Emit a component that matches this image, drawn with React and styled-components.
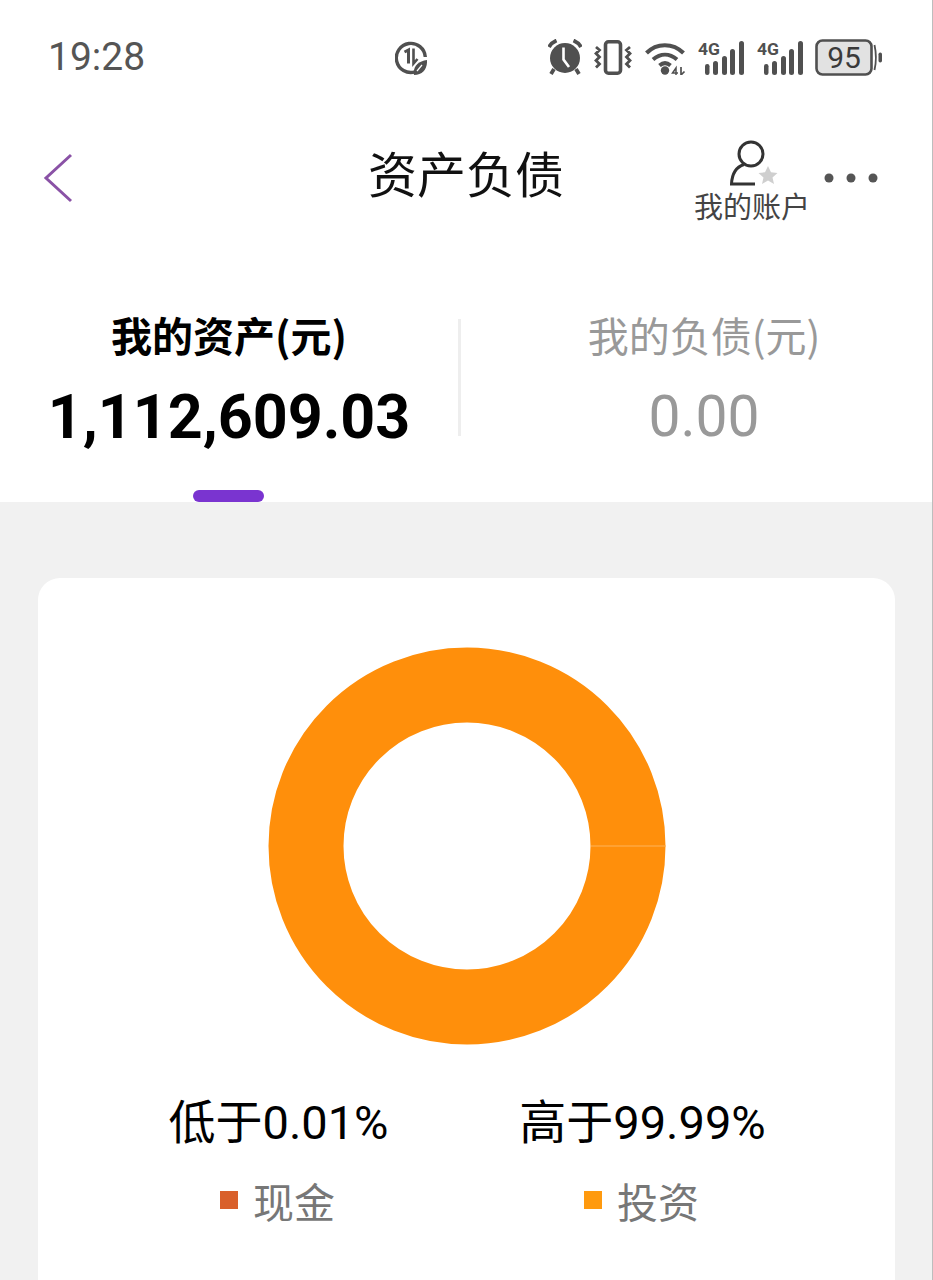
import React from "react";
import styled, { createGlobalStyle } from "styled-components";

const Global = createGlobalStyle`
  html, body { margin: 0; padding: 0; background: #f1f1f1; }
  body { font-family: Roboto, "Noto Sans CJK SC", sans-serif; overflow: hidden; }
`;

const Page = styled.div`
  width: 933px;
  height: 1280px;
  overflow: hidden;
  background: #f1f1f1;
  border-right: 1px solid #bdbdbd;
  box-sizing: border-box;
`;
const Header = styled.header`
  height: 502px;
  background: #fff;
  display: flex;
  flex-direction: column;
`;
const StatusBar = styled.div`
  height: 113px;
  box-sizing: border-box;
  padding: 34px 0 0 48px;
  display: flex;
  align-items: flex-start;
`;
const Time = styled.div`
  font: 400 39px/46px "Roboto", sans-serif;
  width: 347px;
  flex: none;
  color: #555;
`;
const StatusIcons = styled.div`
  display: flex;
  align-items: center;
  height: 46px;
`;
const Glyph = styled.svg`
  flex: none;
  margin-left: ${(p) => p.$ml || 0}px;
  margin-top: ${(p) => p.$mt || 0}px;
`;
const NavBar = styled.nav`
  height: 130px;
  position: relative;
  display: flex;
  align-items: center;
  padding-left: 43px;
`;
const NavTitle = styled.h1`
  position: absolute;
  left: 0;
  right: 0;
  top: 26px;
  margin: 0;
  text-align: center;
  font: 400 49px/66px "Noto Sans CJK SC", sans-serif;
  color: #111;
`;
const NavRight = styled.div`
  margin-left: auto;
  display: flex;
  align-items: flex-start;
  padding-right: 54px;
  gap: 14px;
  position: relative;
  top: 2px;
`;
const Account = styled.div`
  display: flex;
  flex-direction: column;
  align-items: center;
  width: 116px;
`;
const AccountLabel = styled.span`
  font: 400 29px/34px "Noto Sans CJK SC", sans-serif;
  color: #444;
  margin-top: 1px;
`;
const Tabs = styled.div`
  flex: 1;
  display: flex;
  padding-top: 76px;
  position: relative;
`;
const Tab = styled.div`
  flex: none;
  width: ${(p) => p.$w}px;
  height: 117px;
  display: flex;
  flex-direction: column;
  align-items: center;
  color: ${(p) => (p.$active ? "#000" : "#999")};
`;
const TabLabel = styled.div`
  font: ${(p) => (p.$active ? 700 : 400)} 41px/34px "Noto Sans CJK SC", sans-serif;
  margin-top: -2px;
`;
const TabValue = styled.div`
  font: ${(p) => (p.$active ? "700 61px" : "400 57px")}/70px "Roboto", sans-serif;
  margin-top: 31px;
`;
const Divider = styled.div`
  flex: none;
  width: 3px;
  height: 117px;
  background: #eeeeee;
`;
const Indicator = styled.div`
  position: absolute;
  left: 193px;
  bottom: 0;
  width: 71px;
  height: 12px;
  border-radius: 6px;
  background: #7a34d0;
`;
const Card = styled.section`
  margin: 76px 37px 0 38px;
  height: 800px;
  background: #fff;
  border-radius: 22px;
  padding-top: 69px;
  box-sizing: border-box;
  display: flex;
  flex-direction: column;
  align-items: center;
`;
const Donut = styled.div`
  width: 398px;
  height: 398px;
  flex: none;
  margin-left: 1px;
`;
const Legend = styled.div`
  display: grid;
  grid-template-columns: 364px 364px;
  width: 728px;
  margin: 47px 0 0 -12px;
`;
const LegendItem = styled.div`
  display: flex;
  flex-direction: column;
  align-items: center;
`;
const Percent = styled.div`
  font: 400 47px/62px Roboto, "Noto Sans CJK SC", sans-serif;
  color: #000;
`;
const LegendName = styled.div`
  display: flex;
  align-items: center;
  gap: 15px;
  margin: 21px 2px 0 0;
  font: 400 41px/50px "Noto Sans CJK SC", sans-serif;
  color: #777;
`;
const Swatch = styled.i`
  width: 18px;
  height: 18px;
  background: ${(p) => p.$c};
`;

const C = "#505050";
const Dtt = () => (
  <Glyph width="32" height="35" viewBox="0 0 32 35">
    <path d="M20 31.800A14.500 14.500 0 1 1 30.300 17" fill="none" stroke={C} strokeWidth="3.400" />
    <path d="M9.500 12l4-2v13.500" fill="none" stroke={C} strokeWidth="3" />
    <path d="M18.500 8.500v15l4-4.500" fill="none" stroke={C} strokeWidth="2.600" />
    <path d="M19 35c-1.500-8 4-14 13-15 .5 9-4 15-13 15z" fill={C} />
    <path d="M22 31l5-6" fill="none" stroke="#fff" strokeWidth="1.200" />
  </Glyph>
);
const Alarm = () => (
  <Glyph $ml={121} width="34" height="36" viewBox="0 0 34 36">
    <circle cx="17" cy="19" r="15" fill={C} />
    <path d="M15.500 8.500v12l5.500 7.500" fill="none" stroke="#fff" strokeWidth="2.600" />
    <path d="M1 8C3 4.500 5 3 8.500 1.500M33 8C31 4.500 29 3 25.500 1.500" fill="none" stroke={C} strokeWidth="3.800" />
    <path d="M6 30l-3 5M28 30l3 5" fill="none" stroke={C} strokeWidth="3.800" />
  </Glyph>
);
const Vibrate = () => (
  <Glyph $ml={12} width="38" height="35" viewBox="0 0 38 35">
    <rect x="11.500" y="1.800" width="15" height="31.400" rx="3" fill="none" stroke={C} strokeWidth="3.600" />
    <path d="M2 7l3.500 3-3.500 3.500 3.500 3.500-3.500 3.500 3.500 3.500-3.500 3.500M36 7l-3.500 3 3.500 3.500-3.500 3.500 3.500 3.500-3.500 3.500 3.500 3.500" fill="none" stroke={C} strokeWidth="2.800" />
  </Glyph>
);
const Wifi = () => (
  <Glyph $ml={13} width="41" height="35" viewBox="0 0 41 35">
    <path d="M1.500 13C11.500 2.500 28 2.500 38.500 13M8 19.500c7.500-6.500 16.500-6.500 24 0M14.500 25.500c3.500-3 7.500-3 11 0" fill="none" stroke={C} strokeWidth="4" />
    <circle cx="20" cy="30.500" r="4.200" fill={C} />
    <path d="M31 35v-7l-3.500 5h5.500" fill="none" stroke={C} strokeWidth="1.500" />
    <path d="M36 27v8l3.500-3.500" fill="none" stroke={C} strokeWidth="1.700" />
  </Glyph>
);
const Signal = ({ ml }) => (
  <Glyph $ml={ml} width="46" height="35" viewBox="0 0 46 35">
    <text x="0" y="15" fontFamily="Roboto, sans-serif" fontWeight="700" fontSize="17" textLength="22" lengthAdjust="spacingAndGlyphs" fill={C}>4G</text>
    <rect x="7" y="24" width="4.500" height="11" rx="2.200" fill={C} />
    <rect x="15" y="21" width="5" height="14" rx="2.500" fill={C} />
    <rect x="24" y="16" width="5" height="19" rx="2.500" fill={C} />
    <rect x="32" y="9" width="5" height="26" rx="2.500" fill={C} />
    <rect x="41" y="1" width="5" height="34" rx="2.500" fill={C} />
  </Glyph>
);
const Battery = () => (
  <Glyph $ml={12} width="67" height="37" viewBox="0 0 67 37">
    <rect x="1.500" y="1.500" width="55" height="34" rx="6" fill="#e2e2e2" stroke={C} strokeWidth="2.600" />
    <path d="M59.500 6c1.800 8 1.800 17 0 25" fill="none" stroke={C} strokeWidth="1.800" />
    <rect x="63.500" y="13.500" width="3.500" height="10" rx="1.700" fill={C} />
    <text x="29" y="29" textAnchor="middle" fontFamily="Roboto, sans-serif" fontWeight="400" fontSize="30" fill="#3a3a3a">95</text>
  </Glyph>
);
const Back = () => (
  <Glyph width="30" height="50" viewBox="0 0 30 50">
    <path d="M28 2L3 25l25 23" fill="none" stroke="#8a52a6" strokeWidth="3" />
  </Glyph>
);
const AccountIcon = () => (
  <Glyph $ml={6} width="50" height="48" viewBox="0 0 50 48">
    <circle cx="21" cy="15" r="12" fill="none" stroke="#333" strokeWidth="3" />
    <path d="M14 25.500C6 28 2 35 1.500 45H25" fill="none" stroke="#333" strokeWidth="3" />
    <path d="M38 27l3 6.300 6.500.7-5 4.500 1.500 6.500-6-3.500-6 3.500 1.500-6.500-5-4.500 6.500-.7z" fill="#cfcfcf" />
  </Glyph>
);
const More = () => (
  <Glyph $mt={33} width="54" height="12" viewBox="0 0 54 12">
    <circle cx="5" cy="6" r="4.500" fill="#555" />
    <circle cx="27" cy="6" r="4.500" fill="#555" />
    <circle cx="49" cy="6" r="4.500" fill="#555" />
  </Glyph>
);

export default function App() {
  return (
    <Page>
      <Global />
      <Header>
        <StatusBar>
          <Time>19:28</Time>
          <StatusIcons>
            <Dtt />
            <Alarm />
            <Vibrate />
            <Wifi />
            <Signal ml={12} />
            <Signal ml={13} />
            <Battery />
          </StatusIcons>
        </StatusBar>
        <NavBar>
          <Back />
          <NavTitle>资产负债</NavTitle>
          <NavRight>
            <Account>
              <AccountIcon />
              <AccountLabel>我的账户</AccountLabel>
            </Account>
            <More />
          </NavRight>
        </NavBar>
        <Tabs>
          <Tab $active $w={458}>
            <TabLabel $active>我的资产(元)</TabLabel>
            <TabValue $active>1,112,609.03</TabValue>
          </Tab>
          <Divider />
          <Tab $w={486}>
            <TabLabel>我的负债(元)</TabLabel>
            <TabValue>0.00</TabValue>
          </Tab>
          <Indicator />
        </Tabs>
      </Header>
      <Card>
        <Donut>
          <svg width="398" height="398" viewBox="0 0 398 398">
            <circle cx="199" cy="199" r="161" fill="none" stroke="#ff8f0b" strokeWidth="75" />
            <rect x="323" y="198.500" width="75" height="1" fill="#ffb45a" />
          </svg>
        </Donut>
        <Legend>
          <LegendItem>
            <Percent>低于0.01%</Percent>
            <LegendName><Swatch $c="#d9602b" />现金</LegendName>
          </LegendItem>
          <LegendItem>
            <Percent>高于99.99%</Percent>
            <LegendName><Swatch $c="#ff9a0e" />投资</LegendName>
          </LegendItem>
        </Legend>
      </Card>
    </Page>
  );
}
